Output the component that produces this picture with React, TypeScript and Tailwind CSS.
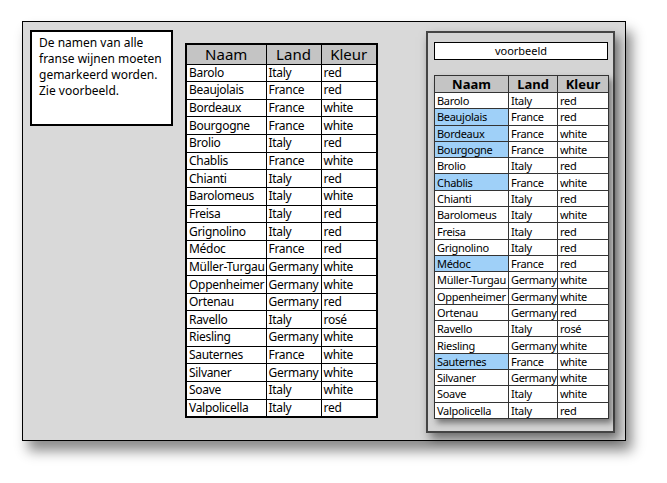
const wines: [string, string, string][] = [
  ["Barolo", "Italy", "red"],
  ["Beaujolais", "France", "red"],
  ["Bordeaux", "France", "white"],
  ["Bourgogne", "France", "white"],
  ["Brolio", "Italy", "red"],
  ["Chablis", "France", "white"],
  ["Chianti", "Italy", "red"],
  ["Barolomeus", "Italy", "white"],
  ["Freisa", "Italy", "red"],
  ["Grignolino", "Italy", "red"],
  ["Médoc", "France", "red"],
  ["Müller-Turgau", "Germany", "white"],
  ["Oppenheimer", "Germany", "white"],
  ["Ortenau", "Germany", "red"],
  ["Ravello", "Italy", "rosé"],
  ["Riesling", "Germany", "white"],
  ["Sauternes", "France", "white"],
  ["Silvaner", "Germany", "white"],
  ["Soave", "Italy", "white"],
  ["Valpolicella", "Italy", "red"],
];

function LeftTable() {
  return (
    <table className="border-collapse border-2 border-black bg-white text-[12px] tracking-[-0.3px] leading-none text-black table-fixed w-[191px]">
      <colgroup>
        <col className="w-[80px]" />
        <col className="w-[55px]" />
        <col className="w-[56px]" />
      </colgroup>
      <thead>
        <tr className="h-[20px] bg-[#c4c4c4] text-[15px]">
          {["Naam", "Land", "Kleur"].map((h) => (
            <th key={h} className="border border-black font-normal tracking-normal">{h}</th>
          ))}
        </tr>
      </thead>
      <tbody>
        {wines.map(([n, l, k]) => (
          <tr key={n} className="h-[17.65px]">
            <td className="border border-black px-[2px] whitespace-nowrap overflow-hidden">{n}</td>
            <td className="border border-black px-[2px] whitespace-nowrap overflow-hidden">{l}</td>
            <td className="border border-black px-[2px]">{k}</td>
          </tr>
        ))}
      </tbody>
    </table>
  );
}

function RightTable() {
  return (
    <table className="border-collapse border border-black bg-white text-[11px] leading-none text-black table-fixed w-[174px] shadow-[3px_4px_6px_rgba(0,0,0,0.45)]">
      <colgroup>
        <col className="w-[74px]" />
        <col className="w-[49px]" />
        <col className="w-[51px]" />
      </colgroup>
      <thead>
        <tr className="h-[17px] bg-[#c4c4c4] text-[13px]">
          {["Naam", "Land", "Kleur"].map((h) => (
            <th key={h} className="border border-[#333] font-bold">{h}</th>
          ))}
        </tr>
      </thead>
      <tbody>
        {wines.map(([n, l, k]) => (
          <tr key={n} className="h-[16.3px]">
            <td className={`border border-[#333] px-[2px] whitespace-nowrap overflow-hidden tracking-[-0.3px] ${l === "France" ? "bg-[#9fd0f8]" : ""}`}>{n}</td>
            <td className="border border-[#333] px-[2px] tracking-[-0.3px]">{l}</td>
            <td className="border border-[#333] px-[2px] tracking-[-0.3px]">{k}</td>
          </tr>
        ))}
      </tbody>
    </table>
  );
}

export default function App() {
  return (
    <div className="w-[667px] h-[483px] bg-white pt-[21px] pl-[22px] font-['Open_Sans','Liberation_Sans',sans-serif]">
      <div className="w-[604px] h-[420px] bg-[#d9d9d9] border border-black shadow-[6px_10px_12px_rgba(0,0,0,0.45)] flex">
        <div className="ml-[7px] mt-[8px] w-[143px] h-[96px] bg-white border-2 border-black px-[7px] pt-[3px] text-[12px] leading-[16px] text-black">
          De namen van alle franse wijnen moeten gemarkeerd worden. Zie voorbeeld.
        </div>
        <div className="ml-[12px] mt-[21px]">
          <LeftTable />
        </div>
        <div className="ml-[48px] mt-[9px] w-[189px] h-[402px] border-2 border-[#444] bg-[#d4d4d4] shadow-[4px_6px_10px_rgba(0,0,0,0.5)] pl-[6px] pt-[9px]">
          <div className="w-[174px] h-[18px] bg-white border border-black text-center text-[11px] leading-[16px] text-black">
            voorbeeld
          </div>
          <div className="mt-[15px]">
            <RightTable />
          </div>
        </div>
      </div>
    </div>
  );
}
